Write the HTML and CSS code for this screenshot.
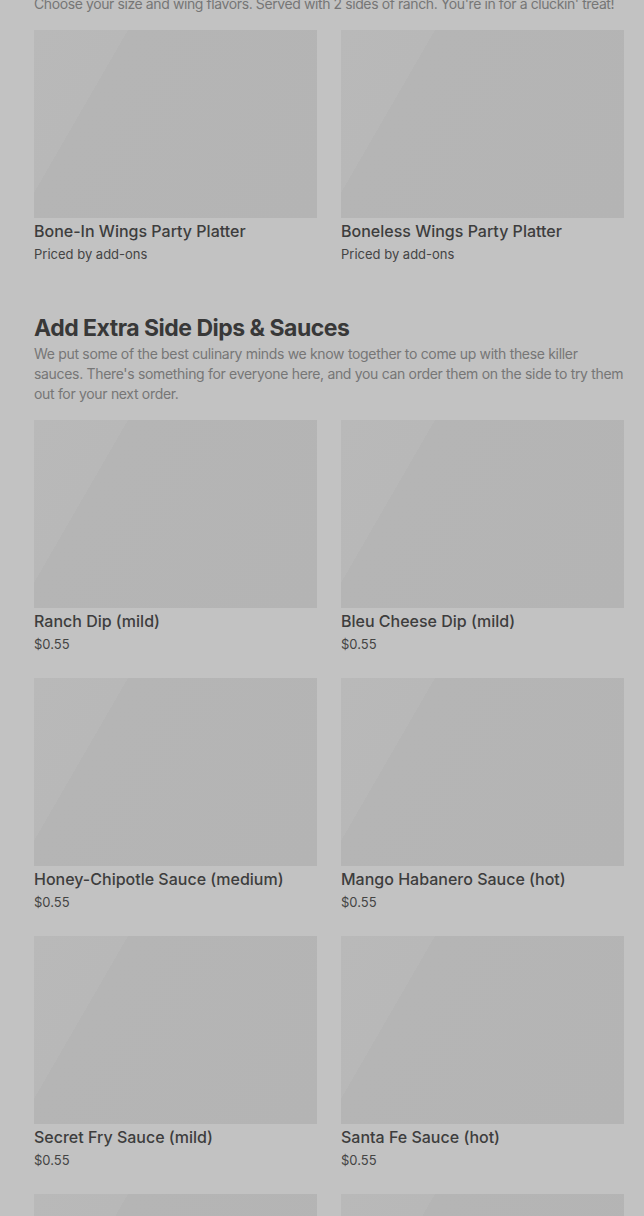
FILE: index.html
```html
<!DOCTYPE html>
<html>
<head>
<meta charset="utf-8">
<link rel="stylesheet" href="styles.css">
</head>
<body>
<div class="page">
  <section class="section">
    <p class="desc">Choose your size and wing flavors. Served with 2 sides of ranch. You're in for a cluckin' treat!</p>
    <div class="grid">
      <div class="item"><div class="img"></div><div class="title">Bone-In Wings Party Platter</div><div class="price">Priced by add-ons</div></div>
      <div class="item"><div class="img"></div><div class="title">Boneless Wings Party Platter</div><div class="price">Priced by add-ons</div></div>
    </div>
  </section>
  <section class="section">
    <h2 class="heading">Add Extra Side Dips &amp; Sauces</h2>
    <p class="desc desc-wide">We put some of the best culinary minds we know together to come up with these killer sauces. There's something for everyone here, and you can order them on the side to try them out for your next order.</p>
    <div class="grid">
      <div class="item"><div class="img"></div><div class="title">Ranch Dip (mild)</div><div class="price">$0.55</div></div>
      <div class="item"><div class="img"></div><div class="title">Bleu Cheese Dip (mild)</div><div class="price">$0.55</div></div>
      <div class="item"><div class="img"></div><div class="title">Honey-Chipotle Sauce (medium)</div><div class="price">$0.55</div></div>
      <div class="item"><div class="img"></div><div class="title">Mango Habanero Sauce (hot)</div><div class="price">$0.55</div></div>
      <div class="item"><div class="img"></div><div class="title">Secret Fry Sauce (mild)</div><div class="price">$0.55</div></div>
      <div class="item"><div class="img"></div><div class="title">Santa Fe Sauce (hot)</div><div class="price">$0.55</div></div>
      <div class="item"><div class="img"></div><div class="title">Garlic Parmesan Sauce (mild)</div><div class="price">$0.55</div></div>
      <div class="item"><div class="img"></div><div class="title">Buffalo Sauce (medium)</div><div class="price">$0.55</div></div>
    </div>
  </section>
</div>
</body>
</html>
```

FILE: styles.css
```css
html, body {
  margin: 0;
  padding: 0;
  background: #c2c2c2;
  overflow: hidden;
}
body {
  font-family: Inter, "Noto Sans", sans-serif;
  color: #3a3a3a;
}
.page {
  padding: 0 20px 0 34px;
  margin-top: -6px;
}
.section {
  margin-bottom: 48px;
}
.heading {
  margin: 0;
  font-size: 23px;
  line-height: 32px;
  font-weight: 700;
  letter-spacing: -0.5px;
  color: #383838;
}
.desc {
  margin: 0 0 16px 0;
  font-size: 14px;
  line-height: 20px;
  color: #767676;
  letter-spacing: -0.4px;
}
.desc-wide {
  letter-spacing: -0.32px;
}
.grid {
  display: grid;
  grid-template-columns: 1fr 1fr;
  column-gap: 24px;
  row-gap: 24px;
}
.item {
  display: flex;
  flex-direction: column;
}
.img {
  height: 188px;
  background: linear-gradient(120deg, #b9b9b9 0%, #b8b8b8 24%, #b5b5b5 24%, #b4b4b4 100%);
}
.title {
  font-size: 16px;
  line-height: 24px;
  font-weight: 500;
  color: #3d3d3d;
  margin-top: 1px;
}
.price {
  font-size: 13px;
  line-height: 20px;
  margin-top: 1px;
  color: #444;
}
```
